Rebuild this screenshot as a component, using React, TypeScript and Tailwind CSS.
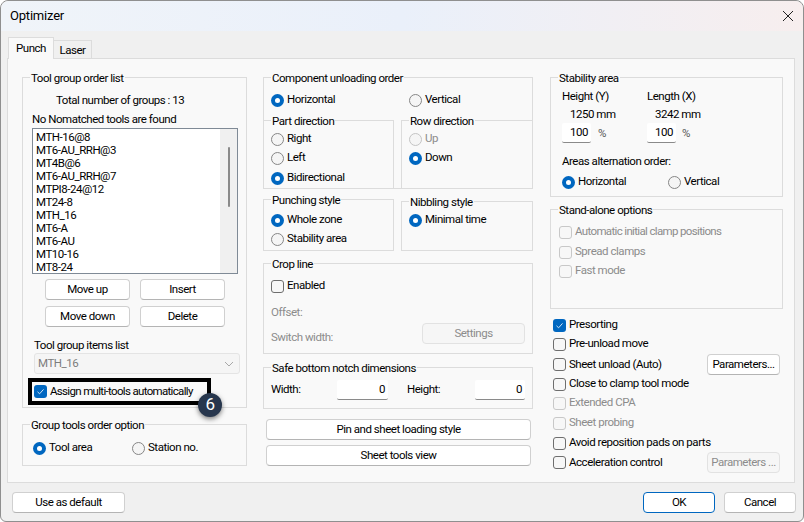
import type { ReactNode } from "react";

const Group = ({ title, className, children }: { title: string; className: string; children?: ReactNode }) => (
  <div className={`relative border border-[#dcdcdc] ${className}`}>
    <span className="absolute left-[7px] top-[-8px] bg-[#f9f9f9] px-[1px] leading-[16px] whitespace-nowrap">{title}</span>
    {children}
  </div>
);

const Radio = ({ label, checked, disabled, className = "" }: { label: string; checked?: boolean; disabled?: boolean; className?: string }) => (
  <div className={`flex h-[16px] items-center gap-[3px] whitespace-nowrap ${disabled ? "text-[#8c8c8c]" : ""} ${className}`}>
    {checked ? (
      <span className="flex h-[13px] w-[13px] items-center justify-center rounded-full bg-[#0067c0]">
        <span className="h-[5px] w-[5px] rounded-full bg-white" />
      </span>
    ) : (
      <span className={`h-[13px] w-[13px] rounded-full border bg-[#f5f5f5] ${disabled ? "border-[#c4c4c4]" : "border-[#868686]"}`} />
    )}
    <span>{label}</span>
  </div>
);

const Check = ({ label, checked, disabled, className = "" }: { label: string; checked?: boolean; disabled?: boolean; className?: string }) => (
  <div className={`flex h-[16px] items-center gap-[3px] whitespace-nowrap ${disabled ? "text-[#8c8c8c]" : ""} ${className}`}>
    {checked ? (
      <span className="flex h-[13px] w-[13px] items-center justify-center rounded-[3px] bg-[#0067c0]">
        <svg width="9" height="9" viewBox="0 0 9 9" fill="none" stroke="#cfe3f5" strokeWidth="1">
          <path d="M1.5 4.8 3.6 6.8 7.5 2.4" />
        </svg>
      </span>
    ) : (
      <span className={`h-[13px] w-[13px] rounded-[3px] border bg-[#f7f7f7] ${disabled ? "border-[#c8c8c8]" : "border-[#6e6e6e]"}`} />
    )}
    <span>{label}</span>
  </div>
);

const Btn = ({ label, disabled, primary, className = "" }: { label: string; disabled?: boolean; primary?: boolean; className?: string }) => (
  <button
    className={`flex h-[21px] items-center justify-center whitespace-nowrap rounded-[4px] border ${
      disabled
        ? "border-[#e2e2e2] bg-[#f6f6f6] text-[#8c8c8c]"
        : primary
          ? "border-[#0067c0] bg-white"
          : "border-[#d0d0d0] border-b-[#b4b4b4] bg-white"
    } ${className}`}
  >
    {label}
  </button>
);

const NumInput = ({ value, className = "" }: { value: string; className?: string }) => (
  <div className={`h-[20px] rounded-[2px] border-b border-b-[#8a8a8a] bg-white pr-[3px] text-right leading-[19px] ${className}`}>{value}</div>
);

const tools = ["MTH-16@8", "MT6-AU_RRH@3", "MT4B@6", "MT6-AU_RRH@7", "MTPI8-24@12", "MT24-8", "MTH_16", "MT6-A", "MT6-AU", "MT10-16", "MT8-24"];

export default function App() {
  return (
    <div className="h-[522px] w-[804px] overflow-hidden bg-white font-[Roboto,sans-serif] text-[11.5px] tracking-[-0.47px] text-black">
      <div className="flex h-full flex-col rounded-t-[8px] rounded-b-[6px] border border-[#8f8f8f] bg-[#f0f0f0]">
        {/* title bar */}
        <div className="flex h-[30px] shrink-0 items-center justify-between rounded-t-[8px] bg-gradient-to-r from-[#f0f4f9] via-[#eaf0fa] to-[#f7eeee] pl-[9px] pr-[9px]">
          <span className="text-[13px] tracking-[-0.2px]">Optimizer</span>
          <svg width="12" height="12" viewBox="0 0 12 12" stroke="#222" strokeWidth="1" fill="none">
            <path d="M1 1 11 11M11 1 1 11" />
          </svg>
        </div>

        {/* tabs */}
        <div className="flex h-[27px] shrink-0 items-end pl-[7px]">
          <div className="z-10 -mb-px h-[22px] w-[46px] border border-b-0 border-[#dcdcdc] bg-[#f9f9f9] text-center leading-[21px]">Punch</div>
          <div className="h-[18px] w-[38px] border border-l-0 border-b-0 border-[#dcdcdc] bg-[#f0f0f0] text-center leading-[18px]">Laser</div>
        </div>

        {/* tab pane */}
        <div className="ml-[6px] flex h-[425px] w-[788px] gap-[16px] border border-[#dcdcdc] bg-[#f9f9f9] pl-[14px] pt-[18px]">
          {/* left column */}
          <div className="flex w-[225px] shrink-0 flex-col gap-[16px]">
            <Group title="Tool group order list" className="h-[331px]">
              <div className="ml-[33px] mt-[14px] leading-[16px]">Total number of groups : 13</div>
              <div className="ml-[9px] mt-[3px] leading-[16px]">No Nomatched tools are found</div>
              <div className="ml-[9px] mt-px flex h-[146px] w-[206px] border border-[#7f8a96] bg-white">
                <div className="flex-1 pl-[3px] pt-[2px] leading-[13px]">
                  {tools.map((t) => (
                    <div key={t}>{t}</div>
                  ))}
                </div>
                <div className="flex w-[17px] justify-center bg-[#f0f0f0] pt-[18px]">
                  <div className="h-[60px] w-[2px] rounded-full bg-[#8a8a8a]" />
                </div>
              </div>
              <div className="ml-[22px] mt-[5px] grid w-[181px] grid-cols-[85px_85px] gap-x-[10px] gap-y-[6px]">
                <Btn label="Move up" className="pt-px" />
                <Btn label="Insert" className="pt-px" />
                <Btn label="Move down" className="pt-px" />
                <Btn label="Delete" className="pt-px" />
              </div>
              <div className="ml-[11px] mt-[10px] leading-[16px]">Tool group items list</div>
              <div className="ml-[11px] flex h-[21px] w-[206px] items-center justify-between rounded-[3px] border border-[#e4e4e4] bg-[#f5f5f5] pl-[3px] pr-[5px] text-[#7d7d7d]">
                MTH_16
                <svg width="10" height="6" viewBox="0 0 10 6" fill="none" stroke="#a8a8a8">
                  <path d="M1 1 5 5 9 1" />
                </svg>
              </div>
              <div className="relative ml-[5px] mt-[4px] flex h-[27px] w-[183px] items-center border-[4px] border-black pl-[2px]">
                <Check label="Assign multi-tools automatically" checked className="tracking-[-0.67px]" />
                <span className="absolute left-[166px] top-[11px] flex h-[24px] w-[24px] items-center justify-center rounded-full bg-[#27364d] text-[17px] text-white shadow-[0_2px_5px_rgba(0,0,0,0.5)]">6</span>
              </div>
            </Group>
            <Group title="Group tools order option" className="h-[42px]">
              <div className="ml-[10px] mt-[15px] flex">
                <Radio label="Tool area" checked className="w-[99px]" />
                <Radio label="Station no." />
              </div>
            </Group>
          </div>

          {/* middle column */}
          <div className="flex w-[270px] shrink-0 flex-col">
            <Group title="Component unloading order" className="h-[112px]">
              <div className="ml-[7px] mt-[14px] flex">
                <Radio label="Horizontal" checked className="w-[138px]" />
                <Radio label="Vertical" />
              </div>
              <div className="-mx-px mt-[12px] flex gap-[7px]">
                <Group title="Part direction" className="h-[69px] w-[131px]">
                  <div className="ml-[7px] mt-[10px]">
                    <Radio label="Right" />
                    <Radio label="Left" className="mt-[3px]" />
                    <Radio label="Bidirectional" checked className="mt-[4px]" />
                  </div>
                </Group>
                <Group title="Row direction" className="h-[69px] w-[132px]">
                  <div className="ml-[7px] mt-[10px]">
                    <Radio label="Up" disabled />
                    <Radio label="Down" checked className="mt-[3px]" />
                  </div>
                </Group>
              </div>
            </Group>
            <div className="mt-[10px] flex h-[52px] items-end gap-[7px]">
              <Group title="Punching style" className="h-[52px] w-[131px]">
                <div className="ml-[7px] mt-[12px]">
                  <Radio label="Whole zone" checked />
                  <Radio label="Stability area" className="mt-[3px]" />
                </div>
              </Group>
              <Group title="Nibbling style" className="h-[50px] w-[132px]">
                <div className="ml-[7px] mt-[10px]">
                  <Radio label="Minimal time" checked />
                </div>
              </Group>
            </div>
            <Group title="Crop line" className="mt-[12px] h-[91px]">
              <Check label="Enabled" className="ml-[7px] mt-[14px]" />
              <div className="ml-[7px] mt-[10px] leading-[16px] text-[#8c8c8c]">Offset:</div>
              <div className="mr-[7px] flex items-start justify-between pl-[7px]">
                <span className="mt-[9px] leading-[16px] text-[#8c8c8c]">Switch width:</span>
                <Btn label="Settings" disabled className="mt-[3px] w-[103px] pt-px" />
              </div>
            </Group>
            <Group title="Safe bottom notch dimensions" className="mt-[13px] h-[42px]">
              <div className="ml-[7px] mt-[12px] flex items-center">
                <span className="w-[66px]">Width:</span>
                <NumInput value="0" className="w-[51px]" />
                <span className="ml-[19px] w-[68px]">Height:</span>
                <NumInput value="0" className="w-[50px]" />
              </div>
            </Group>
            <Btn label="Pin and sheet loading style" className="ml-[3px] mt-[10px] w-[265px] pt-px" />
            <Btn label="Sheet tools view" className="ml-[3px] mt-[5px] w-[265px] pt-px" />
          </div>

          {/* right column */}
          <div className="ml-px flex w-[233px] shrink-0 flex-col">
            <Group title="Stability area" className="h-[120px]">
              <div className="ml-[11px] mt-[10px] grid grid-cols-[85px_85px] leading-[16px]">
                <span>Height (Y)</span>
                <span>Length (X)</span>
                <span className="ml-[8px] mt-[2px]">1250 mm</span>
                <span className="ml-[8px] mt-[2px]">3242 mm</span>
              </div>
              <div className="ml-[11px] mt-px grid grid-cols-[85px_85px]">
                <div className="flex">
                  <NumInput value="100" className="w-[29px]" />
                  <span className="ml-[7px] mt-[2px] text-[#555]">%</span>
                </div>
                <div className="flex">
                  <NumInput value="100" className="w-[29px]" />
                  <span className="ml-[6px] mt-[2px] text-[#555]">%</span>
                </div>
              </div>
              <div className="ml-[11px] mt-[10px] leading-[16px]">Areas alternation order:</div>
              <div className="ml-[11px] mt-[5px] flex">
                <Radio label="Horizontal" checked className="w-[106px]" />
                <Radio label="Vertical" />
              </div>
            </Group>
            <Group title="Stand-alone options" className="mt-[12px] h-[100px]">
              <div className="ml-[8px] mt-[14px] flex flex-col gap-[3px]">
                <Check label="Automatic initial clamp positions" disabled className="tracking-[-0.65px]" />
                <Check label="Spread clamps" disabled className="mt-px" />
                <Check label="Fast mode" disabled />
              </div>
            </Group>
            <div className="ml-[3px] mt-[8px] flex flex-col gap-[3px]">
              <Check label="Presorting" checked />
              <Check label="Pre-unload move" />
              <div className="mt-px flex items-center justify-between pr-[3px]">
                <Check label="Sheet unload (Auto)" />
                <Btn label="Parameters..." className="-my-[2px] h-[18px] w-[73px]" />
              </div>
              <Check label="Close to clamp tool mode" />
              <Check label="Extended CPA" disabled />
              <Check label="Sheet probing" disabled className="mt-px" />
              <Check label="Avoid reposition pads on parts" className="mt-px" />
              <div className="flex items-center justify-between pr-[3px]">
                <Check label="Acceleration control" />
                <Btn label="Parameters ..." disabled className="-my-[2px] h-[18px] w-[73px]" />
              </div>
            </div>
          </div>
        </div>

        {/* bottom buttons */}
        <div className="flex items-center pl-[11px] pr-[7px] pt-[9px]">
          <Btn label="Use as default" className="w-[113px] pt-px" />
          <Btn label="OK" primary className="ml-auto w-[72px] pt-px" />
          <Btn label="Cancel" className="ml-[9px] w-[72px] pt-px" />
        </div>
      </div>
    </div>
  );
}
